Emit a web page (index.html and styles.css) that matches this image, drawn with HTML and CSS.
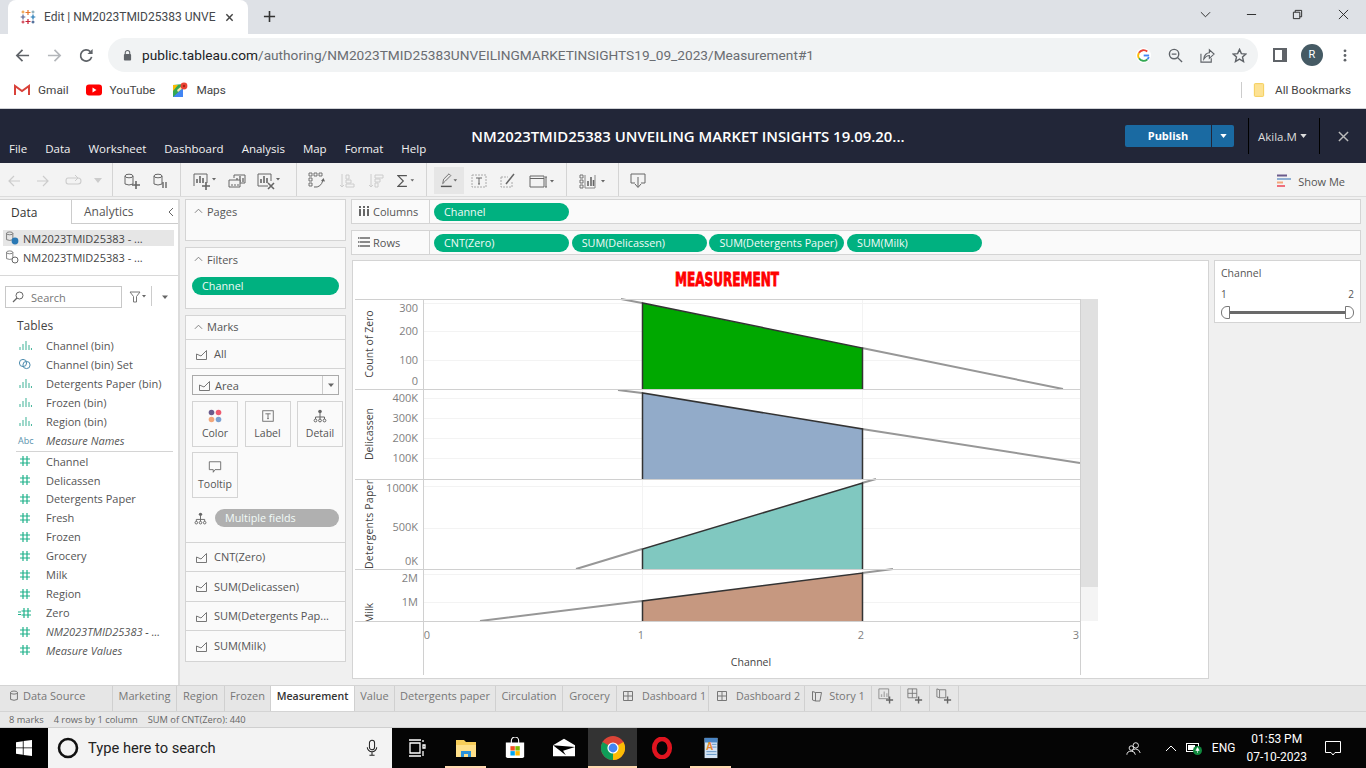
FILE: index.html
```html
<!DOCTYPE html>
<html lang="en">
<head>
<meta charset="utf-8">
<title>Edit | NM2023TMID25383</title>
<link rel="stylesheet" href="styles.css">
</head>
<body>
<svg class="defs" width="0" height="0">
  <symbol id="bin" viewBox="0 0 14 12"><path d="M2 11V8M5 11V5M8 11V2M11 11V6M13.5 11V9" stroke="#4fb8a0" stroke-width="1.1" fill="none"/></symbol>
  <symbol id="hash" viewBox="0 0 12 12"><path d="M4 1V11M8 1V11M1 4H11M1 8H11" stroke="#1fb18a" stroke-width="1.2" fill="none"/></symbol>
  <symbol id="area" viewBox="0 0 14 14"><path d="M1.5 12.5V7L6 9L11.5 3.5V12.5Z" fill="none" stroke="#777" stroke-width="1"/></symbol>
  <symbol id="db" viewBox="0 0 14 14"><ellipse cx="6" cy="3" rx="4" ry="1.8" fill="none" stroke="#666"/><path d="M2 3V11Q6 13 10 11V3" fill="none" stroke="#666"/></symbol>
  <symbol id="detail" viewBox="0 0 14 14"><circle cx="7" cy="2.5" r="1.8" fill="#666"/><path d="M7 4V8M2.5 10V8H11.5V10M7 8V10" stroke="#666" fill="none"/><circle cx="2.5" cy="11.5" r="1.4" fill="none" stroke="#666"/><circle cx="7" cy="11.5" r="1.4" fill="none" stroke="#666"/><circle cx="11.5" cy="11.5" r="1.4" fill="none" stroke="#666"/></symbol>
  <symbol id="dash" viewBox="0 0 12 12"><path d="M1.5 1.5H10.5V10.5H1.5ZM6 1.5V10.5M1.5 6H10.5" fill="none" stroke="#777"/></symbol>
  <symbol id="caret" viewBox="0 0 8 5"><path d="M1 .5H7L4 4Z" fill="#666"/></symbol>
</svg>

<header class="tabstrip">
  <div class="tab">
    <svg class="ic16" viewBox="0 0 16 16"><path d="M8 1V6M5.5 3.5H10.5" stroke="#e8762b" stroke-width="1.2"/><path d="M8 10V15M5.5 12.5H10.5" stroke="#c72035" stroke-width="1.2"/><path d="M3 5.5V10.5M.7 8H5.3" stroke="#5b6591" stroke-width="1.2"/><path d="M13 5.5V10.5M10.7 8H15.3" stroke="#1f77b4" stroke-width="1.2"/><path d="M3 1.5V4.5M1.5 3H4.5" stroke="#eb912b" stroke-width="1"/><path d="M13 1.5V4.5M11.5 3H14.5" stroke="#7099a6" stroke-width="1"/><path d="M3 11.5V14.5M1.5 13H4.5" stroke="#c72035" stroke-width="1"/><path d="M13 11.5V14.5M11.5 13H14.5" stroke="#1f447d" stroke-width="1"/></svg>
    <span class="tab-title">Edit | NM2023TMID25383 UNVE</span>
    <svg class="tab-x" viewBox="0 0 10 10"><path d="M1.5 1.5L8.5 8.5M8.5 1.5L1.5 8.5" stroke="#444" stroke-width="1.6"/></svg>
  </div>
  <svg class="tab-plus" viewBox="0 0 14 14"><path d="M7 1V13M1 7H13" stroke="#333" stroke-width="1.7"/></svg>
  <div class="winctl">
    <svg viewBox="0 0 12 12"><path d="M1 3.5L6 8.5L11 3.5" fill="none" stroke="#222"/></svg>
    <svg viewBox="0 0 12 12"><path d="M1 6H11" stroke="#222"/></svg>
    <svg viewBox="0 0 12 12"><path d="M1.5 3.5H8.5V10.5H1.5ZM3.5 3.5V1.5H10.5V8.5H8.5" fill="none" stroke="#222"/></svg>
    <svg viewBox="0 0 12 12"><path d="M1 1L11 11M11 1L1 11" stroke="#222"/></svg>
  </div>
</header>

<nav class="addrbar">
  <svg class="nav-ic" viewBox="0 0 16 16"><path d="M15 8H2M8 2L2 8L8 14" fill="none" stroke="#5f6368" stroke-width="1.8"/></svg>
  <svg class="nav-ic" viewBox="0 0 16 16"><path d="M1 8H14M8 2L14 8L8 14" fill="none" stroke="#b4b7bb" stroke-width="1.8"/></svg>
  <svg class="nav-ic" viewBox="0 0 16 16"><path d="M13.5 9.5A6 6 0 1 1 12 3.8" fill="none" stroke="#5f6368" stroke-width="1.8"/><path d="M14.5 1V6.5H9Z" fill="#5f6368"/></svg>
  <div class="omnibox">
    <svg class="lock" viewBox="0 0 10 12"><path d="M2.5 5V3.5A2.5 2.5 0 0 1 7.5 3.5V5" fill="none" stroke="#5f6368" stroke-width="1.2"/><rect x="1" y="5" width="8" height="7" rx="1" fill="#5f6368"/></svg>
    <span class="url"><b>public.tableau.com</b>/authoring/NM2023TMID25383UNVEILINGMARKETINSIGHTS19_09_2023/Measurement#1</span>
    <div class="omni-icons">
      <svg viewBox="0 0 16 16"><circle cx="8" cy="8" r="8" fill="#fff"/><path d="M14 8H8.2" stroke="#4285f4" stroke-width="2"/><path d="M13.6 9.5A5.8 5.8 0 0 1 12 12.2" fill="none" stroke="#4285f4" stroke-width="2"/><path d="M12 12.2A5.8 5.8 0 0 1 3.2 11" fill="none" stroke="#34a853" stroke-width="2"/><path d="M3.2 11A5.8 5.8 0 0 1 3.2 5" fill="none" stroke="#fbbc05" stroke-width="2"/><path d="M3.2 5A5.8 5.8 0 0 1 12 3.8" fill="none" stroke="#ea4335" stroke-width="2"/></svg>
      <svg viewBox="0 0 16 16"><circle cx="6.5" cy="6.5" r="5" fill="none" stroke="#5f6368" stroke-width="1.5"/><path d="M4 6.5H9M10 10L15 15" stroke="#5f6368" stroke-width="1.5"/></svg>
      <svg viewBox="0 0 16 16"><path d="M1 6V15H12V11" fill="none" stroke="#5f6368" stroke-width="1.2"/><path d="M4 12C4 7 8 5 10 5V2L15 6.5L10 11V8C8 8 6 9 4 12Z" fill="none" stroke="#5f6368" stroke-width="1.2"/></svg>
      <svg viewBox="0 0 16 16"><path d="M8 1.5L10 6L14.8 6.4L11.2 9.6L12.3 14.4L8 11.8L3.7 14.4L4.8 9.6L1.2 6.4L6 6Z" fill="none" stroke="#5f6368" stroke-width="1.5"/></svg>
    </div>
  </div>
  <svg class="side-ic" viewBox="0 0 14 14"><rect width="14" height="14" fill="#5f6368"/><rect x="2" y="2" width="7" height="10" fill="#fff"/></svg>
  <span class="avatar">R</span>
  <svg class="menu-ic" viewBox="0 0 4 14"><circle cx="2" cy="2" r="1.5" fill="#5f6368"/><circle cx="2" cy="7" r="1.5" fill="#5f6368"/><circle cx="2" cy="12" r="1.5" fill="#5f6368"/></svg>
</nav>

<nav class="bookmarks">
  <a class="bm"><svg viewBox="0 0 16 12"><path d="M1 11V2L8 7L15 2V11" fill="none" stroke="#d9423a" stroke-width="2"/></svg>Gmail</a>
  <a class="bm"><svg viewBox="0 0 16 12"><rect width="16" height="11" y=".5" rx="3" fill="#f00"/><path d="M6.5 3.5V8.5L10.5 6Z" fill="#fff"/></svg>YouTube</a>
  <a class="bm bm-maps"><svg viewBox="0 0 16 16"><path d="M1 3L11 2V15L1 15Z" fill="#34a853"/><path d="M1 15L11 6V15Z" fill="#4285f4"/><path d="M1 3L6 3L1 9Z" fill="#fbbc05"/><path d="M5 8L11 3V6L6 10Z" fill="#f5e9b0"/><circle cx="12" cy="4" r="3.4" fill="#ea4335"/><circle cx="12" cy="4" r="1.2" fill="#a52714"/></svg>Maps</a>
  <span class="bm-sep"></span>
  <a class="bm bm-all"><svg viewBox="0 0 12 16"><rect x=".7" y=".7" width="10.6" height="14.6" rx="1" fill="#fde293" stroke="#f2c94c"/></svg>All Bookmarks</a>
</nav>

<header class="appbar">
  <nav class="menu"><span>File</span><span>Data</span><span>Worksheet</span><span>Dashboard</span><span>Analysis</span><span>Map</span><span>Format</span><span>Help</span></nav>
  <h1 class="wb-title">NM2023TMID25383 UNVEILING MARKET INSIGHTS 19.09.20...</h1>
  <div class="publish"><span class="pub-main">Publish</span><span class="pub-drop"><svg viewBox="0 0 8 5"><path d="M0 0H8L4 5Z" fill="#fff"/></svg></span></div>
  <div class="user">Akila.M <svg viewBox="0 0 8 5"><path d="M0 0H8L4 5Z" fill="#ddd"/></svg></div>
  <svg class="app-x" viewBox="0 0 12 12"><path d="M1 1L11 11M11 1L1 11" stroke="#bbb" stroke-width="1.6"/></svg>
</header>

<div class="toolbar">
  <div class="tg tg1">
    <svg class="ti w14" viewBox="0 0 14 14"><path d="M13 7H2M7 2L2 7L7 12" fill="none" stroke="#ccc" stroke-width="1.2"/></svg>
    <svg class="ti w14" viewBox="0 0 14 14"><path d="M1 7H12M7 2L12 7L7 12" fill="none" stroke="#ccc" stroke-width="1.2"/></svg>
    <svg class="ti w18" viewBox="0 0 18 14"><path d="M12 4H3Q1 4 1 7T3 10H13Q16 10 16 7T13 4" fill="none" stroke="#ccc" stroke-width="1.1"/><path d="M10 1L13 4L10 7" fill="none" stroke="#ccc"/></svg>
    <svg class="ti w8" viewBox="0 0 8 5"><path d="M0 0H8L4 5Z" fill="#ccc"/></svg>
  </div>
  <div class="tg tg2">
    <svg class="ti w18" viewBox="0 0 18 18"><use href="#db" width="14" height="14" y="1"/><path d="M9 13H17M13 9V17" stroke="#666" stroke-width="1.6"/></svg>
    <svg class="ti w18" viewBox="0 0 18 18"><use href="#db" width="14" height="14" y="1"/><path d="M11 10V16M14 10V16" stroke="#666" stroke-width="1.4"/></svg>
  </div>
  <div class="tg tg3">
    <svg class="ti w24" viewBox="0 0 24 18"><path d="M1 14V2H14V11" fill="none" stroke="#666"/><path d="M4 11V7M7 11V4M10 11V6" stroke="#666" stroke-width="1.6"/><path d="M9 14H17M13 10V18" stroke="#666" stroke-width="1.6"/><path d="M19 6H23L21 8.5Z" fill="#666"/></svg>
    <svg class="ti w18" viewBox="0 0 18 16"><path d="M6 5V2H17V10H12" fill="none" stroke="#666"/><path d="M9 9V5M12 9V3M15 9V5" stroke="#666" stroke-width="1.3"/><path d="M1 7H12V14H1Z" fill="#f3f3f3" stroke="#666"/><path d="M3 12H5M6 12H8M9 12H11" stroke="#666"/></svg>
    <svg class="ti w24" viewBox="0 0 24 18"><path d="M11 14H1V2H14V9" fill="none" stroke="#666"/><path d="M4 11V7M7 11V4M10 11V6" stroke="#666" stroke-width="1.6"/><path d="M11 11L17 17M17 11L11 17" stroke="#666" stroke-width="1.6"/><path d="M19 6H23L21 8.5Z" fill="#666"/></svg>
  </div>
  <div class="tg tg4">
    <svg class="ti w18" viewBox="0 0 18 18"><path d="M1 1H4V4H1ZM6 1H9V4H6ZM11 1H14V4H11ZM1 6H4V9H1ZM1 11H4V14H1Z" fill="none" stroke="#666" stroke-width=".9"/><path d="M6 15Q13 16 15 8" fill="none" stroke="#666"/><path d="M13 9L15.5 6L17 9.5Z" fill="#666"/></svg>
    <svg class="ti w16" viewBox="0 0 16 16"><path d="M3 1V14M1 12L3 14L5 12" fill="none" stroke="#ccc"/><path d="M7 2H10V6H7ZM7 7H12V10H7ZM7 11H15V14H7Z" fill="none" stroke="#ccc"/></svg>
    <svg class="ti w16" viewBox="0 0 16 16"><path d="M3 1V14M1 12L3 14L5 12" fill="none" stroke="#ccc"/><path d="M7 2H15V5H7ZM7 6H12V9H7ZM7 10H10V14H7Z" fill="none" stroke="#ccc"/></svg>
    <svg class="ti w18" viewBox="0 0 20 16"><path d="M11 2H1L7 8L1 14H11" fill="none" stroke="#555" stroke-width="1.3"/><path d="M15 6H19L17 8.5Z" fill="#666"/></svg>
  </div>
  <div class="tg tg5">
    <span class="hl"><svg class="ti w18" viewBox="0 0 20 18"><path d="M3 12L4 7L10 1L12 3L6 9Z" fill="none" stroke="#666"/><path d="M1 15H13" stroke="#555" stroke-width="1.6"/><path d="M15 7H19L17 9.5Z" fill="#666"/></svg></span>
    <svg class="ti w16" viewBox="0 0 16 16"><rect x="1" y="2" width="14" height="12" fill="none" stroke="#aaa" stroke-dasharray="2 1"/><path d="M5 5H11M8 5V11M7 11H9" stroke="#666" fill="none"/></svg>
    <svg class="ti w16" viewBox="0 0 16 16"><path d="M1 4H8M1 4V14H12V8" fill="none" stroke="#aaa" stroke-dasharray="2 1"/><path d="M6 11L14 1" stroke="#666" stroke-width="1.5"/></svg>
    <svg class="ti w26" viewBox="0 0 26 16"><path d="M1 3H15V14H1ZM1 5.5H15" fill="none" stroke="#666"/><path d="M17 4V14M16 4H18M16 14H18" stroke="#666" fill="none"/><path d="M21 7H25L23 9.5Z" fill="#666"/></svg>
  </div>
  <div class="tg tg6">
    <svg class="ti w28" viewBox="0 0 28 16"><path d="M1 2H4V5H1ZM1 7H4V10H1ZM1 12H4V15H1Z" fill="none" stroke="#666" stroke-width=".9"/><path d="M6 2V15H16V2" fill="none" stroke="#888"/><path d="M9 13V8M12 13V4M14.5 13V7" stroke="#666" stroke-width="1.6"/><path d="M22 7H26L24 9.5Z" fill="#666"/></svg>
  </div>
  <div class="tg tg7">
    <svg class="ti w16" viewBox="0 0 16 16"><path d="M5 10H1V1H15V10H11" fill="none" stroke="#666" stroke-linejoin="round"/><path d="M8 4V14M5 11L8 14.5L11 11" fill="none" stroke="#666"/></svg>
  </div>
  <div class="showme"><svg viewBox="0 0 14 14"><path d="M0 1.5H10" stroke="#6b5b8c" stroke-width="2"/><path d="M0 5H14" stroke="#8fb0d3" stroke-width="2"/><path d="M0 8.5H6" stroke="#f2a77b" stroke-width="2"/><path d="M0 12H8" stroke="#ef6f7c" stroke-width="2"/></svg>Show Me</div>
</div>

<main class="main">
  <aside class="datapane">
    <div class="dtabs"><span class="dtab on">Data</span><span class="dtab">Analytics<svg class="chev" viewBox="0 0 6 10"><path d="M5 1L1 5L5 9" fill="none" stroke="#666"/></svg></span></div>
    <div class="ds sel"><svg viewBox="0 0 14 14"><use href="#db" width="11" height="11"/><circle cx="10" cy="10" r="3.4" fill="#2a79b5"/></svg>NM2023TMID25383 - ...</div>
    <div class="ds"><svg viewBox="0 0 14 14"><use href="#db" width="11" height="11"/><circle cx="10" cy="10" r="3" fill="#fff" stroke="#666"/></svg>NM2023TMID25383 - ...</div>
    <div class="searchrow">
      <div class="search"><svg viewBox="0 0 12 12"><circle cx="7.5" cy="4.5" r="3.5" fill="none" stroke="#666"/><path d="M5 7L1 11" stroke="#666" stroke-width="1.2"/></svg>Search</div>
      <svg class="funnel" viewBox="0 0 18 12"><path d="M1 1H11L7.5 5.5V11H4.5V5.5Z" fill="none" stroke="#777"/><path d="M13 4H17L15 6.5Z" fill="#666"/></svg>
      <svg class="drop" viewBox="0 0 8 5"><use href="#caret"/></svg>
    </div>
    <div class="tables">Tables</div>
    <ul class="fields">
      <li><svg><use href="#bin"/></svg>Channel (bin)</li>
      <li><svg viewBox="0 0 14 12"><circle cx="5" cy="5" r="3.6" fill="none" stroke="#4d8cae"/><circle cx="8.5" cy="7" r="3.6" fill="none" stroke="#4d8cae"/></svg>Channel (bin) Set</li>
      <li><svg><use href="#bin"/></svg>Detergents Paper (bin)</li>
      <li><svg><use href="#bin"/></svg>Frozen (bin)</li>
      <li><svg><use href="#bin"/></svg>Region (bin)</li>
      <li class="it"><span class="abc">Abc</span>Measure Names</li>
      <li class="sep"></li>
      <li><svg><use href="#hash"/></svg>Channel</li>
      <li><svg><use href="#hash"/></svg>Delicassen</li>
      <li><svg><use href="#hash"/></svg>Detergents Paper</li>
      <li><svg><use href="#hash"/></svg>Fresh</li>
      <li><svg><use href="#hash"/></svg>Frozen</li>
      <li><svg><use href="#hash"/></svg>Grocery</li>
      <li><svg><use href="#hash"/></svg>Milk</li>
      <li><svg><use href="#hash"/></svg>Region</li>
      <li><svg viewBox="0 0 14 12"><path d="M0 5H3M0 7.5H3" stroke="#1fb18a"/><path d="M6 1V11M10 1V11M3.5 4H13M3.5 8H13" stroke="#1fb18a" stroke-width="1.2" fill="none"/></svg>Zero</li>
      <li class="it"><svg><use href="#hash"/></svg>NM2023TMID25383 - ...</li>
      <li class="it"><svg><use href="#hash"/></svg>Measure Values</li>
    </ul>
  </aside>

  <section class="cards">
    <div class="card c-pages"><div class="card-h"><svg viewBox="0 0 10 6"><path d="M1 5L5 1L9 5" fill="none" stroke="#777"/></svg>Pages</div></div>
    <div class="card c-filters"><div class="card-h"><svg viewBox="0 0 10 6"><path d="M1 5L5 1L9 5" fill="none" stroke="#777"/></svg>Filters</div><div class="pill wide">Channel</div></div>
    <div class="card c-marks">
      <div class="card-h mh"><svg viewBox="0 0 10 6"><path d="M1 5L5 1L9 5" fill="none" stroke="#777"/></svg>Marks</div>
      <div class="mrow"><svg><use href="#area"/></svg>All</div>
      <div class="mbody">
        <div class="select"><svg><use href="#area"/></svg><span>Area</span><i><svg viewBox="0 0 8 5"><use href="#caret"/></svg></i></div>
        <div class="mbtns">
          <div class="mbtn"><svg viewBox="0 0 16 16"><circle cx="4" cy="4" r="3.2" fill="#6b5b8c"/><circle cx="12" cy="4" r="3.2" fill="#ef5a6f"/><circle cx="4" cy="12" r="3.2" fill="#f2a77b"/><circle cx="12" cy="12" r="3.2" fill="#7ba1d1"/></svg>Color</div>
          <div class="mbtn"><svg viewBox="0 0 16 16"><rect x="2" y="2" width="12" height="12" fill="none" stroke="#666"/><path d="M5 5.5H11M8 5.5V11M7 11H9" stroke="#666" fill="none"/></svg>Label</div>
          <div class="mbtn"><svg><use href="#detail"/></svg>Detail</div>
          <div class="mbtn"><svg viewBox="0 0 16 16"><path d="M1.5 2H14.5V11H8L6 14V11H1.5Z" fill="none" stroke="#666"/></svg>Tooltip</div>
        </div>
        <div class="mfields"><svg><use href="#detail"/></svg><span class="pill gray">Multiple fields</span></div>
      </div>
      <div class="mrow"><svg><use href="#area"/></svg>CNT(Zero)</div>
      <div class="mrow"><svg><use href="#area"/></svg>SUM(Delicassen)</div>
      <div class="mrow"><svg><use href="#area"/></svg>SUM(Detergents Pap...</div>
      <div class="mrow last"><svg><use href="#area"/></svg>SUM(Milk)</div>
    </div>
  </section>

  <section class="work">
    <div class="shelf"><div class="shelf-l"><svg viewBox="0 0 12 12"><path d="M2 1V11M6 1V11M10 1V11" stroke="#666" stroke-width="2" stroke-dasharray="2 1 7 0"/></svg>Columns</div><div class="shelf-p"><span class="pill">Channel</span></div></div>
    <div class="shelf"><div class="shelf-l"><svg viewBox="0 0 12 12"><path d="M2 2H12M2 6H12M2 10H12" stroke="#666" stroke-width="1.4"/><path d="M0 2H1.5M0 6H1.5M0 10H1.5" stroke="#666" stroke-width="1.4"/></svg>Rows</div><div class="shelf-p"><span class="pill">CNT(Zero)</span><span class="pill">SUM(Delicassen)</span><span class="pill">SUM(Detergents Paper)</span><span class="pill">SUM(Milk)</span></div></div>
    <div class="canvas">
      <div class="viz">
        <svg class="chart" viewBox="352 261 857 418" width="857" height="418">
          <defs><clipPath id="milkclip"><rect x="352" y="570" width="70" height="51"/></clipPath></defs>
          <rect x="1081" y="299" width="17" height="288" fill="#e0e0e0"/>
          <rect x="1081" y="587" width="17" height="34" fill="#f4f4f4"/>
          <g class="grid">
            <path d="M424 303.5H1080M424 331.5H1080M424 360.5H1080M424 398.5H1080M424 418.5H1080M424 438.5H1080M424 458.5H1080M424 486.5H1080M424 528.5H1080M424 574.5H1080M424 602.5H1080"/>
            <path d="M642.5 299V621M862.5 299V621"/>
          </g>
          <polygon points="642,303 862,348 862,389 642,389" fill="#00a800"/>
          <polygon points="642,393 862,429 862,479 642,479" fill="#92abc9"/>
          <polygon points="642,549 862,483 862,569 642,569" fill="#80c8c0"/>
          <polygon points="642,601 862,573 862,621 642,621" fill="#c69880"/>
          <g class="ghost">
            <path d="M621 299L642 303M862 348L1063 389"/>
            <path d="M618 390L642 393M862 429L1080 463"/>
            <path d="M576 569L642 549M862 483L876 479"/>
            <path d="M480 621L642 601M862 573L893 569"/>
          </g>
          <g class="solid">
            <path d="M642.5 389V303L862.5 348V389"/>
            <path d="M642.5 479V393L862.5 429V479"/>
            <path d="M642.5 569V549L862.5 483V569"/>
            <path d="M642.5 621V601L862.5 573V621"/>
          </g>
          <g class="axis">
            <path d="M355 299.5H1080M355 389.5H1080M355 479.5H1080M355 569.5H1080M355 621.5H1080M423.5 299V675M1080.5 299V675"/>
          </g>
          <text class="title" x="727" y="285.5" text-anchor="middle" textLength="104" lengthAdjust="spacingAndGlyphs">MEASUREMENT</text>
          <g class="tick">
            <text x="418" y="312">300</text><text x="418" y="335">200</text><text x="418" y="364">100</text><text x="418" y="385">0</text>
            <text x="418" y="402">400K</text><text x="418" y="422">300K</text><text x="418" y="442">200K</text><text x="418" y="462">100K</text>
            <text x="418" y="492">1000K</text><text x="418" y="531">500K</text><text x="418" y="565">0K</text>
            <text x="418" y="582">2M</text><text x="418" y="606">1M</text>
          </g>
          <g class="tick xt"><text x="427" y="639">0</text><text x="641" y="639">1</text><text x="861" y="639">2</text><text x="1076" y="639">3</text></g>
          <text class="atitle" x="751" y="666" text-anchor="middle">Channel</text>
          <text class="atitle" transform="translate(373 344) rotate(-90)" text-anchor="middle">Count of Zero</text>
          <text class="atitle" transform="translate(373 434) rotate(-90)" text-anchor="middle">Delicassen</text>
          <text class="atitle" transform="translate(373 524.5) rotate(-90)" text-anchor="middle" textLength="89">Detergents Paper</text>
          <g clip-path="url(#milkclip)"><text class="atitle" transform="translate(373 613) rotate(-90)" text-anchor="middle">Milk</text></g>
        </svg>
      </div>
      <div class="legend">
        <div class="lg-t">Channel</div>
        <div class="lg-r"><span>1</span><span>2</span></div>
        <div class="slider"><i class="kn l"></i><b></b><i class="kn r"></i></div>
      </div>
    </div>
  </section>
</main>

<div class="sheets">
  <span class="st"><svg class="st-i" viewBox="0 0 14 14"><use href="#db" width="14" height="14" x="1"/></svg>Data Source</span>
  <span class="st">Marketing</span><span class="st">Region</span><span class="st">Frozen</span><span class="st on">Measurement</span><span class="st">Value</span><span class="st">Detergents paper</span><span class="st">Circulation</span><span class="st">Grocery</span>
  <span class="st sd"><svg class="st-i"><use href="#dash"/></svg>Dashboard 1</span>
  <span class="st sd"><svg class="st-i"><use href="#dash"/></svg>Dashboard 2</span>
  <span class="st"><svg class="st-i" viewBox="0 0 12 12"><path d="M1.5 1.5L4.5 2.5V11L1.5 10ZM4.5 2.5H10.5L9 10.5V11H4.5" fill="none" stroke="#777"/></svg>Story 1</span>
  <span class="st ic"><svg viewBox="0 0 18 18"><path d="M1 1H12V12H1Z" fill="none" stroke="#888"/><path d="M4 10V7M7 10V4M10 10V6" stroke="#aaa" stroke-width="1.5"/><path d="M9 13.5H17M13 9.5V17.5" stroke="#666" stroke-width="1.6"/></svg></span>
  <span class="st ic"><svg viewBox="0 0 18 18"><path d="M1 1H11V11H1ZM6 1V11M1 6H11" fill="none" stroke="#777"/><path d="M9 13.5H17M13 9.5V17.5" stroke="#666" stroke-width="1.6"/></svg></span>
  <span class="st ic"><svg viewBox="0 0 18 18"><path d="M1 1L4 2V11L1 10ZM4 2H11V11H4" fill="none" stroke="#777"/><path d="M9 13.5H17M13 9.5V17.5" stroke="#666" stroke-width="1.6"/></svg></span>
</div>
<div class="status"><span>8 marks</span><span>4 rows by 1 column</span><span>SUM of CNT(Zero): 440</span></div>

<footer class="taskbar">
  <div class="start"><svg viewBox="0 0 16 16"><path d="M0 2.2L6.8 1.2V7.5H0ZM7.6 1.1L16 0V7.5H7.6ZM0 8.3H6.8V14.8L0 13.8ZM7.6 8.3H16V16L7.6 14.9Z" fill="#fff"/></svg></div>
  <div class="tsearch">
    <svg class="cortana" viewBox="0 0 22 22"><circle cx="11" cy="11" r="9" fill="none" stroke="#111" stroke-width="2.6"/></svg>
    <span>Type here to search</span>
    <svg class="mic" viewBox="0 0 14 20"><rect x="4" y="1" width="6" height="11" rx="3" fill="none" stroke="#222" stroke-width="1.2"/><path d="M1.5 9A5.5 5.5 0 0 0 12.5 9M7 14.5V18M4 18.5H10" fill="none" stroke="#222" stroke-width="1.2"/></svg>
  </div>
  <div class="apps">
    <span class="app"><svg viewBox="0 0 18 18"><path d="M1 1H13M1 17H13M2 4H12V14H2ZM15 1V3M15 6H17V9H15ZM15 12V17" fill="none" stroke="#fff" stroke-width="1.3"/></svg></span>
    <span class="app act-a"><svg viewBox="0 0 22 22"><path d="M1 3H9L11 5H21V20H1Z" fill="#f7cd59"/><path d="M1 8H21V20H1Z" fill="#ffe08a"/><path d="M6 20V14H16V20H13V17H9V20Z" fill="#2b92d9"/></svg></span>
    <span class="app"><svg viewBox="0 0 22 24"><path d="M7 7V4A4 4 0 0 1 15 4V7" fill="none" stroke="#fff" stroke-width="1.2"/><path d="M1 6H21V21Q21 23 19 23H3Q1 23 1 21Z" fill="#fff"/><rect x="6" y="10" width="4.8" height="4.8" fill="#f25022"/><rect x="11.4" y="10" width="4.8" height="4.8" fill="#7fba00"/><rect x="6" y="15.4" width="4.8" height="4.8" fill="#00a4ef"/><rect x="11.4" y="15.4" width="4.8" height="4.8" fill="#ffb900"/></svg></span>
    <span class="app"><svg viewBox="0 0 24 20"><path d="M0 7L12 0L24 7V19H0Z" fill="#fff"/><path d="M0 7L24 9L11 13L14 18Z" fill="#000"/></svg></span>
    <span class="app act-c"><svg viewBox="0 0 24 24"><circle cx="12" cy="12" r="12" fill="#db4437"/><path d="M12 12L22.4 6A12 12 0 0 1 12 24Z" fill="#fbbc05"/><path d="M12 12L12 24A12 12 0 0 1 1.6 6Z" fill="#0f9d58"/><circle cx="12" cy="12" r="5.6" fill="#fff"/><circle cx="12" cy="12" r="4.4" fill="#4285f4"/></svg></span>
    <span class="app"><svg viewBox="0 0 22 24"><ellipse cx="11" cy="12" rx="8.5" ry="10" fill="none" stroke="#e0141f" stroke-width="5"/></svg></span>
    <span class="app act-w"><svg viewBox="0 0 18 24"><rect x="2" y="1" width="14" height="22" fill="#d4e4f4"/><path d="M2 1H16V6H2Z" fill="#4b86c5"/><path d="M10 8H15M10 11H15M4 16H15M4 19H15" stroke="#5b8fc2"/><text class="wp" x="3.5" y="14">A</text></svg></span>
  </div>
  <div class="tray">
    <svg class="t-p" viewBox="0 0 18 16"><circle cx="11" cy="4.5" r="3" fill="none" stroke="#fff"/><path d="M6 14Q6 9 11 8.5Q15 9 16 13" fill="none" stroke="#fff"/><circle cx="6" cy="7.5" r="2.5" fill="#000" stroke="#fff"/><path d="M1 15Q1 11 6 11Q10 11 10.5 15" fill="#000" stroke="#fff"/></svg>
    <svg class="t-c" viewBox="0 0 12 8"><path d="M1 7L6 2L11 7" fill="none" stroke="#fff"/></svg>
    <svg class="t-b" viewBox="0 0 16 14"><rect x=".5" y="2.5" width="12" height="8" fill="#000" stroke="#fff"/><rect x="2" y="4" width="7" height="5" fill="#fff"/><circle cx="11.5" cy="9.5" r="4.5" fill="#10893e"/><path d="M11.5 6.5L9.8 9.5H13.2Z M11.5 12V9" fill="#fff" stroke="#fff" stroke-width=".6"/></svg>
    <span class="t-l">ENG</span>
    <span class="t-d"><span>01:53 PM</span><span>07-10-2023</span></span>
    <svg class="t-n" viewBox="0 0 16 16"><path d="M.5 1.5H15.5V12.5H10L8 15L6 12.5H.5Z" fill="none" stroke="#fff"/></svg>
  </div>
</footer>
</body>
</html>
```

FILE: styles.css
```css
* { box-sizing: border-box; }
html, body { margin: 0; padding: 0; }
body { width: 1366px; height: 768px; overflow: hidden; background: #f0f0f0; font-family: "Open Sans", "Liberation Sans", sans-serif; color: #444; }
svg { display: block; flex: none; }
.defs { position: absolute; }

/* browser chrome */
.tabstrip { height: 34px; background: #dee1e6; display: flex; align-items: flex-end; }
.tab { margin-left: 8px; width: 240px; height: 34px; background: #fff; border-radius: 8px 8px 0 0; display: flex; align-items: center; padding: 0 14px 0 12px; }
.ic16 { width: 16px; height: 16px; margin-right: 8px; margin-top: -1px; }
.tab-title { flex: 1; font: 12px "Roboto", "Open Sans", sans-serif; color: #45484c; white-space: nowrap; overflow: hidden; }
.tab-x { width: 9px; height: 9px; margin-left: 8px; }
.tab-plus { width: 13px; height: 13px; margin: 0 0 11px 15px; }
.winctl { margin-left: auto; display: flex; gap: 35px; align-items: center; height: 28px; margin-bottom: 6px; padding-right: 17px; }
.winctl svg { width: 11px; height: 11px; }
.addrbar { height: 38px; background: #fff; display: flex; align-items: center; padding: 0 0 0 15px; }
.nav-ic { width: 15px; height: 15px; margin-right: 17px; margin-top: 4px; }
.nav-ic + .nav-ic + .nav-ic { margin-right: 14px; }
.omnibox { width: 1150px; height: 34px; margin-top: 4px; background: #f1f3f4; border-radius: 17px; display: flex; align-items: center; padding-left: 15px; }
.lock { width: 9px; height: 12px; margin-right: 10px; }
.url { font: 13.68px "Roboto", sans-serif; color: #6a6d72; white-space: nowrap; }
.url b { font-weight: 400; color: #202124; }
.omni-icons { margin-left: auto; display: flex; padding-right: 11px; gap: 17px; }
.omni-icons svg { width: 15px; height: 15px; }
.side-ic { width: 14px; height: 14px; margin: 4px 0 0 15px; }
.avatar { width: 22px; height: 22px; border-radius: 50%; background: #455a64; color: #fff; font: 11px/22px "Roboto", sans-serif; text-align: center; margin: 4px 0 0 14px; }
.menu-ic { width: 4px; height: 13px; margin: 4px 0 0 20px; }
.bookmarks { height: 37px; background: #fff; border-bottom: 1px solid #d0d2d6; display: flex; align-items: center; padding: 0 15px 0 14px; font: 11.8px "Roboto", sans-serif; color: #444; }
.bm { display: flex; align-items: center; margin-right: 17px; white-space: nowrap; }
.bm svg { width: 16px; height: 14px; margin-right: 8px; }
.bm-maps svg { height: 16px; }
.bm-sep { width: 1px; height: 16px; background: #ccc; margin-left: auto; margin-right: 11px; }
.bm-all { margin-right: 0; }
.bm-all svg { width: 12px; height: 14px; margin-right: 10px; }

/* tableau header */
.appbar { height: 54px; background: #222638; color: #fff; display: flex; align-items: center; }
.menu { display: flex; gap: 18px; padding: 25px 0 0 9px; font-size: 11.5px; color: #f2f2f2; }
.wb-title { margin: 0 0 0 45px; font-size: 14.9px; font-weight: 600; color: #fff; white-space: nowrap; }
.publish { margin-left: auto; display: flex; height: 22px; font-size: 11px; font-weight: 700; }
.pub-main { width: 86px; background: #1a6aa2; line-height: 22px; text-align: center; border-radius: 2px 0 0 2px; }
.pub-drop { width: 22px; margin-left: 1px; background: #1a6aa2; border-radius: 0 2px 2px 0; display: flex; align-items: center; justify-content: center; }
.pub-drop svg { width: 7px; height: 4px; }
.user { margin-left: 14px; width: 72px; height: 36px; border-left: 1px solid #000; border-right: 1px solid #000; display: flex; align-items: center; padding-left: 9px; font-size: 11.5px; color: #ddd; gap: 3px; }
.user svg { width: 7px; height: 4px; }
.app-x { width: 11px; height: 11px; margin: 0 17px 0 18px; }

/* toolbar */
.toolbar { height: 34px; background: #f3f3f3; border-bottom: 1px solid #dcdcdc; display: flex; align-items: center; }
.tg { height: 100%; display: flex; align-items: center; border-right: 1px solid #d4d4d4; padding-top: 2px; }
.tg1 { width: 113px; padding-left: 7px; gap: 15px; }
.tg1 .w8 { margin-left: -4px; }
.tg2 { width: 68px; padding-left: 10px; gap: 11px; }
.tg3 { width: 116px; padding-left: 12px; gap: 11px; }
.tg4 { width: 130px; padding-left: 11px; gap: 13px; }
.tg5 { width: 140px; padding-left: 7px; gap: 13px; }
.tg6 { width: 52px; padding-left: 12px; }
.tg7 { width: 40px; padding-left: 11px; border-right: 0; }
.hl { width: 30px; height: 27px; background: #e6e6e6; display: flex; align-items: center; justify-content: center; margin-right: -6px; }
.ti { height: 16px; }
.w8 { width: 8px; height: 5px; }
.w14 { width: 14px; height: 14px; }
.w16 { width: 16px; }
.w18 { width: 18px; height: 18px; }
.w24 { width: 24px; height: 18px; }
.w26 { width: 26px; }
.w28 { width: 28px; }
.showme { margin-left: auto; display: flex; align-items: center; gap: 7px; font-size: 11px; color: #555; padding-right: 21px; padding-top: 3px; }
.showme svg { width: 14px; height: 14px; }

/* main */
.main { height: 488px; display: flex; background: #f0f0f0; }
.datapane { width: 180px; background: #fff; border-right: 2px solid #dcdcdc; border-top: 1px solid #d4d4d4; margin-top: 2px; height: 486px; font-size: 11px; color: #555; }
.dtabs { display: flex; height: 24px; }
.dtab { display: flex; align-items: center; font-size: 12px; color: #555; border-bottom: 1px solid #ccc; width: 106px; padding-left: 12px; }
.dtab.on { width: 72px; border-bottom: 0; border-right: 1px solid #ccc; padding-left: 11px; color: #333; }
.chev { width: 6px; height: 10px; margin-left: auto; margin-right: 4px; }
.ds { display: flex; align-items: center; height: 16px; margin: 6px 4px 0 3px; gap: 4px; white-space: nowrap; color: #444; padding-left: 2px; }
.ds svg { width: 14px; height: 14px; }
.ds.sel { background: #e6e6e6; }
.ds + .ds { margin-top: 3px; }
.searchrow { position: relative; margin-top: 10px; border-top: 1px solid #d8d8d8; padding: 10px 0 0 5px; display: flex; align-items: center; }
.search { width: 117px; height: 22px; border: 1px solid #c8c8c8; display: flex; align-items: center; padding-left: 6px; gap: 7px; color: #777; }
.search svg { width: 12px; height: 12px; }
.funnel { width: 18px; height: 12px; margin-left: 7px; }
.drop { width: 8px; height: 5px; margin-left: 14px; }
.searchrow::after { content: ""; position: absolute; left: 151px; top: 10px; width: 1px; height: 20px; background: #ccc; }
.tables { font-size: 12px; color: #444; margin: 9px 0 0 17px; }
.fields { list-style: none; margin: 2px 0 0; padding: 0; }
.fields li { height: 18.95px; display: flex; align-items: center; color: #555; white-space: nowrap; }
.fields li svg { width: 14px; height: 12px; margin: 0 14px 0 18px; }
.fields .it { font-style: italic; }
.abc { padding-left: 18px; margin-right: 10px; font-size: 9px; color: #5a93ad; font-style: normal; box-sizing: content-box; width: 18px; }
.fields .sep { height: 1px; background: #d4d4d4; margin: 1px 5px 0 16px; }

.cards { width: 161px; margin-left: 5px; display: flex; flex-direction: column; gap: 6px; padding-top: 2px; font-size: 11px; }
.card { background: #fafafa; border: 1px solid #d4d4d4; color: #555; }
.card-h { height: 23px; display: flex; align-items: center; gap: 4px; padding: 0 0 1px 8px; color: #555; }
.card-h svg { width: 9px; height: 6px; }
.c-pages { height: 42px; }
.c-filters { height: 62px; }
.c-marks { height: 347px; }
.mh { height: 23.5px; border-bottom: 1px solid #d4d4d4; }
.mrow { height: 29.5px; display: flex; align-items: center; border-bottom: 1px solid #d4d4d4; padding-left: 9px; gap: 5px; color: #555; }
.mrow svg { width: 14px; height: 14px; }
.mrow.last { border-bottom: 0; }
.mbody { padding: 6px 0 0 6px; height: 173.5px; border-bottom: 1px solid #d4d4d4; }
.select { width: 147px; height: 20px; border: 1px solid #aaa; display: flex; align-items: center; padding-left: 5px; gap: 3px; }
.select svg { width: 14px; height: 14px; }
.select i { margin-left: auto; width: 16px; height: 100%; border-left: 1px solid #ccc; display: flex; align-items: center; justify-content: center; }
.select i svg { width: 8px; height: 5px; }
.mbtns { display: grid; grid-template-columns: 46px 46px 46px; column-gap: 6.5px; row-gap: 5px; margin-top: 6px; }
.mbtn { height: 46px; border: 1px solid #d4d4d4; display: flex; flex-direction: column; align-items: center; justify-content: flex-end; padding-bottom: 6px; gap: 3px; font-size: 10.5px; }
.mbtn svg { width: 14px; height: 14px; }
.mfields { display: flex; align-items: center; margin-top: 11px; gap: 8px; padding-left: 2px; }
.mfields svg { width: 13px; height: 13px; }
.pill { height: 18px; border-radius: 9px; background: #00b180; color: #f2fbf8; padding-left: 10px; line-height: 18px; font-size: 10.8px; white-space: nowrap; overflow: hidden; display: block; width: 135px; }
.pill.wide { width: 147px; margin: 6px 0 0 6px; }
.pill.gray { background: #b0b0b0; width: 124px; }

.work { width: 1010px; margin-left: 5px; padding-top: 2px; font-size: 11px; }
.shelf { height: 25px; border: 1px solid #d4d4d4; background: #fafafa; display: flex; margin-bottom: 6px; }
.shelf-l { width: 78px; border-right: 1px solid #d4d4d4; display: flex; align-items: center; gap: 3px; padding: 0 0 1px 6px; color: #555; }
.shelf-l svg { width: 12px; height: 12px; }
.shelf-p { display: flex; align-items: center; gap: 2.7px; padding-left: 4px; }
.canvas { display: flex; align-items: flex-start; margin-top: -1px; gap: 5px; }
.viz { width: 857px; height: 419px; margin-left: 1px; background: #fff; border: 1px solid #d4d4d4; position: relative; overflow: hidden; }
.chart { position: absolute; left: -1px; top: 0; }
.grid path { stroke: #f3f3f3; stroke-width: 1; fill: none; }
.ghost path { stroke: #979797; stroke-width: 2; fill: none; }
.solid path { stroke: #333; stroke-width: 1.5; fill: none; }
.axis path { stroke: #d0d0d0; stroke-width: 1; fill: none; }
.title { font: 900 20px "DejaVu Sans Condensed", "Liberation Sans", sans-serif; fill: #ff0000; stroke: #ff0000; stroke-width: .9px; }
.tick text { font: 11px "Open Sans", sans-serif; fill: #7f7f7f; text-anchor: end; }
.tick.xt text { text-anchor: middle; }
.atitle { font: 10.5px "Open Sans", sans-serif; fill: #444; }
.legend { width: 147px; height: 63px; background: #fff; border: 1px solid #d4d4d4; padding: 5px 6px 0 6px; font-size: 10.5px; color: #555; }
.lg-t { line-height: 15px; }
.lg-r { display: flex; justify-content: space-between; margin-top: 7px; line-height: 13px; font-size: 10px; }
.slider { display: flex; align-items: center; margin-top: 5px; height: 13px; }
.slider b { flex: 1; height: 3px; background: #6a6a6a; }
.kn { width: 9px; height: 13px; border: 1px solid #777; background: #fff; }
.kn.l { border-radius: 6px 0 0 6px; }
.kn.r { border-radius: 0 6px 6px 0; }

/* sheet tabs */
.sheets { height: 27px; display: grid; grid-template-columns: 113px 64px 48px 46px 84px 40px 101px 67px 54px 92px 96px 67px 29px 29px 29px; background: #e6e6e6; border-top: 1px solid #d4d4d4; border-bottom: 1px solid #d4d4d4; justify-content: start; font-size: 11px; color: #777; }
.st { display: flex; align-items: center; justify-content: center; border-right: 1px solid #d0d0d0; white-space: nowrap; gap: 6px; padding-bottom: 6px; }
.st:first-child { justify-content: flex-start; padding-left: 8px; gap: 3px; }
.st.on { background: #fff; color: #333; font-weight: 600; font-size: 10.6px; }
.st.sd { gap: 8px; padding-left: 3px; font-size: 10.7px; }
.st-i { width: 12px; height: 12px; }
.st.ic svg { width: 16px; height: 16px; }
.status { height: 16px; background: #e8e8e8; border-bottom: 1px solid #cfcfcf; display: flex; gap: 10px; padding-left: 9px; font-size: 9.3px; line-height: 15px; color: #666; }

/* taskbar */
.taskbar { height: 40px; background: #050505; display: flex; align-items: center; }
.start { width: 48px; height: 40px; display: flex; align-items: center; justify-content: center; background: #000; }
.start svg { width: 16px; height: 16px; }
.tsearch { width: 344px; height: 40px; background: #f3f3f3; display: flex; align-items: center; padding-left: 9px; font: 14.7px "Roboto", sans-serif; color: #222; }
.cortana { width: 22px; height: 22px; margin-right: 9px; }
.mic { width: 12px; height: 18px; margin-left: auto; margin-right: 14px; }
.apps { display: flex; height: 40px; padding-left: 2px; }
.app { width: 49px; height: 40px; display: flex; align-items: center; justify-content: center; position: relative; }
.app svg { width: 22px; height: 22px; }
.app:first-child { margin-left: -2px; }
.app:first-child svg { width: 18px; height: 18px; }
.act-c { background: #333; }
.act-c svg { width: 24px; height: 24px; }
.act-a::after, .act-c::after, .act-w::after { content: ""; position: absolute; left: 4px; right: 4px; bottom: 0; height: 2px; background: #ffd9b0; }
.act-c::after { left: 0; right: 0; }
.wp { font: 700 11px "Liberation Sans", sans-serif; fill: #e8862a; }
.tray { margin-left: auto; display: flex; align-items: center; color: #fff; font: 12px "Roboto", sans-serif; padding-right: 25px; }
.t-p { width: 16px; height: 15px; margin-right: 23px; }
.t-c { width: 12px; height: 8px; margin-right: 9px; }
.t-b { width: 16px; height: 14px; margin-right: 10px; }
.t-l { margin-right: 11px; }
.t-d { display: flex; flex-direction: column; align-items: center; line-height: 18px; margin-right: 18px; }
.t-n { width: 16px; height: 16px; }
```
